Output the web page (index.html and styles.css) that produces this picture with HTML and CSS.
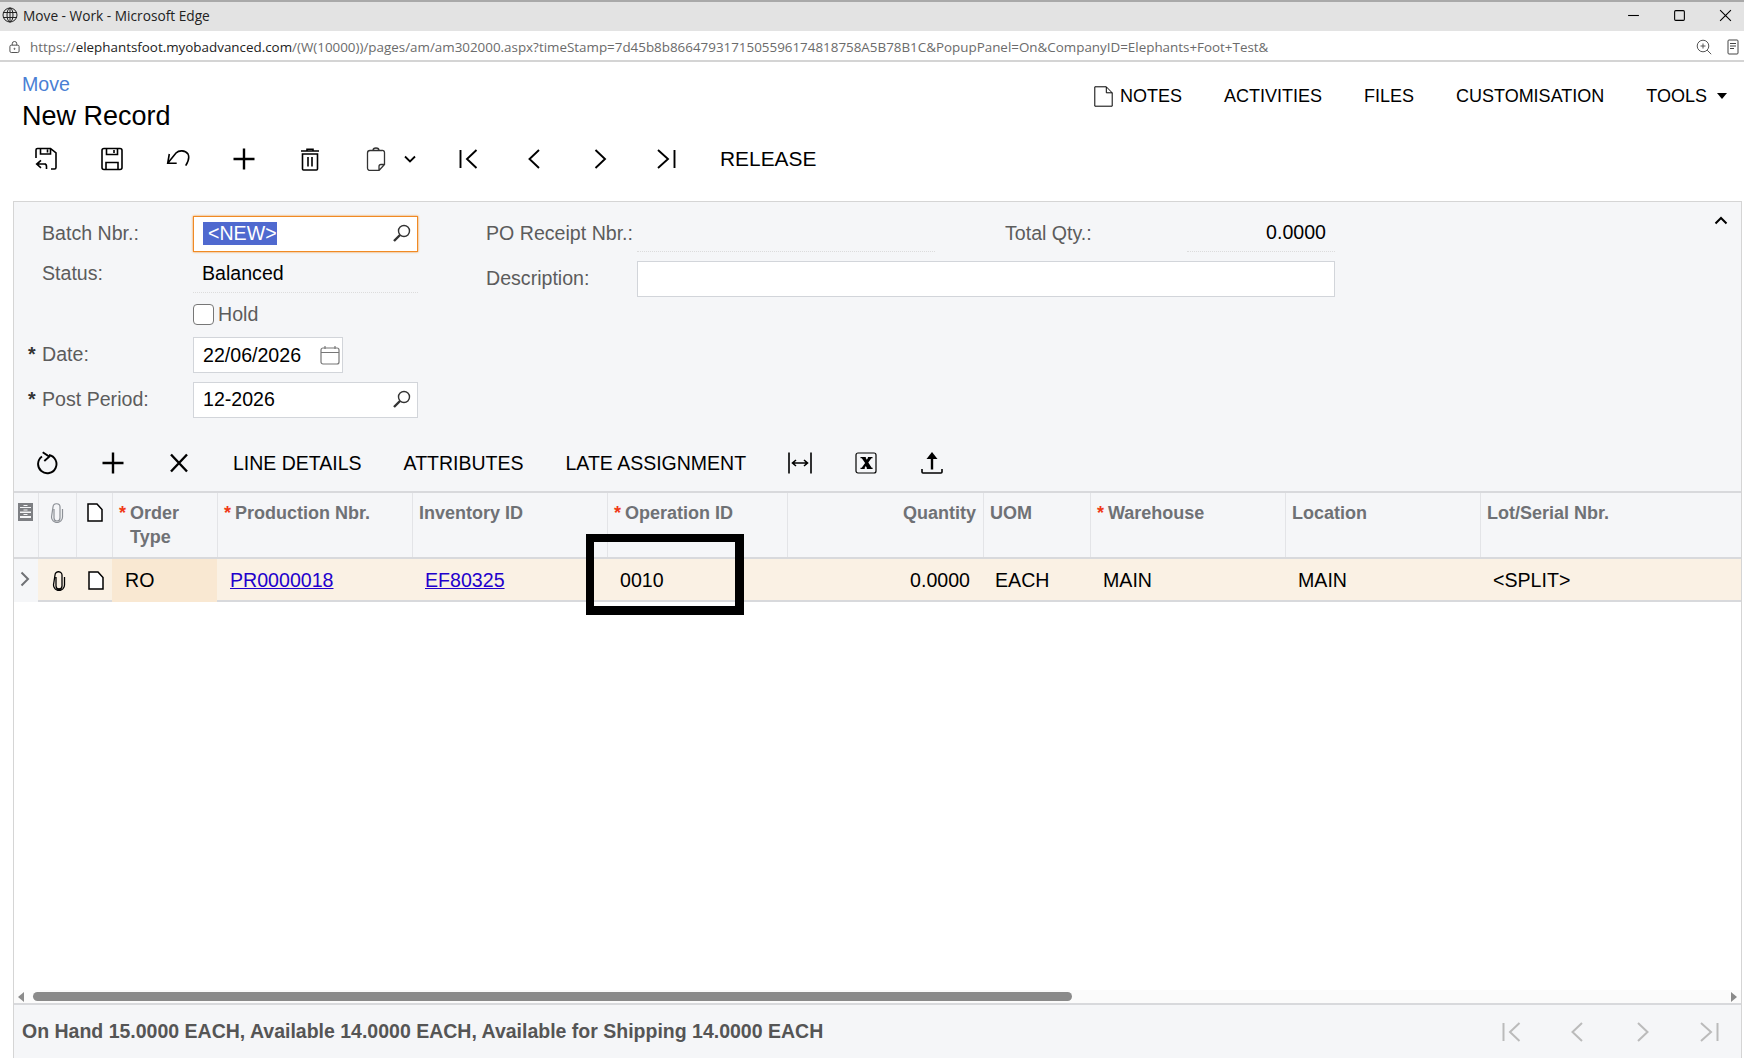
FILE: index.html
```html
<!DOCTYPE html>
<html lang="en">
  <head>
    <meta charset="UTF-8" />
    <title>Move - Work - Microsoft Edge</title>
    <link rel="stylesheet" href="styles.css">
  </head>

  <body>
    <div class="title-bar">
      <svg class="globe" viewBox="0 0 16 16"><circle cx="8" cy="8" r="7"/><ellipse cx="8" cy="8" rx="3" ry="7"/><path d="M1 5.5h14M1 10.5h14M8 1v14"/></svg>
      <span class="title-text">Move - Work - Microsoft Edge</span>
      <div class="window-btns">
        <svg viewBox="0 0 12 12"><path d="M1 6h10"/></svg>
        <svg viewBox="0 0 12 12"><rect x="1.5" y="1.5" width="9" height="9" rx="1"/></svg>
        <svg viewBox="0 0 12 12"><path d="M1 1l10 10M11 1L1 11"/></svg>
      </div>
    </div>

    <div class="address-bar">
      <svg class="lock" viewBox="0 0 12 14"><rect x="1" y="5" width="10" height="8" rx="1.5"/><path d="M3.5 5V3.5a2.5 2.5 0 0 1 5 0V5"/><circle cx="6" cy="9" r=".6"/></svg>
      <span class="url">https://<b>elephantsfoot.myobadvanced.com</b>/(W(10000))/pages/am/am302000.aspx?timeStamp=7d45b8b8664793171505596174818758A5B78B1C&amp;PopupPanel=On&amp;CompanyID=Elephants+Foot+Test&amp;</span>
      <svg class="addr-zoom" viewBox="0 0 16 16"><circle cx="7" cy="7" r="5.8"/><path d="M11.2 11.2l4 4M7 4.5v5M4.5 7h5"/></svg>
      <svg class="addr-read" viewBox="0 0 12 16"><rect x="1" y="1" width="10" height="14" rx="1"/><path d="M3 4.5h6M3 7h6M3 9.5h4"/></svg>
    </div>

    <div class="page-head">
      <div class="head-titles">
        <a class="crumb">Move</a>
        <div class="record-title">New Record</div>
      </div>
      <div class="head-links">
        <span class="head-link notes">
          <svg viewBox="0 0 19 21"><path d="M.8.8h11.5l5.9 6v13.4H.8zM12.3.8v6h5.9"/></svg>
          NOTES
        </span>
        <span class="head-link">ACTIVITIES</span>
        <span class="head-link">FILES</span>
        <span class="head-link">CUSTOMISATION</span>
        <span class="head-link tools">TOOLS<i class="caret"></i></span>
      </div>
    </div>

    <div class="toolbar main-toolbar">
      <button class="tool"><svg viewBox="0 0 24 24"><path d="M2 11V3a1.5 1.5 0 0 1 1.5-1.5h13L22 6v14.500a1.500 1.500 0 0 1-1.500 1.500H17M6.500 1.500v5.500h10V1.500M13.500 2.500v3"/><path d="M12 17H3.500M7 13.300l-4.300 3.800L7 20.800M10.500 17c1.500 0 2 1 2 2.500V22"/></svg></button>
      <button class="tool"><svg viewBox="0 0 24 24"><rect x="2" y="1.500" width="20" height="21" rx="2"/><path d="M6.500 1.500v6h11v-6M14 3v3M6 22.500v-7h12v7"/></svg></button>
      <button class="tool"><svg viewBox="0 0 24 24"><path d="M3.300 7L1.700 16.300H10.700M1.700 16.300L10 6C13 3 19 3 22 7C24 11 22 15 19.700 18.700"/></svg></button>
      <button class="tool"><svg viewBox="0 0 24 24"><path class="thick" d="M12 1.500v21M1.500 12h21"/></svg></button>
      <button class="tool"><svg viewBox="0 0 24 24"><path d="M3 4h18M9 4V2.200h6V4M4.500 7h15v15a1 1 0 0 1-1 1h-13a1 1 0 0 1-1-1zM10 10v9.500M14 10v9.500"/></svg></button>
      <button class="tool paste">
        <svg class="paste-icon" viewBox="0 0 24 24"><path d="M6 3.500h12a2 2 0 0 1 2.500 2v12L15 23.500H6a2.500 2.500 0 0 1-2.500-2.500V6A2.500 2.500 0 0 1 6 3.500zM9 3.500a3 2.500 0 0 1 6 0M20.500 17.500H17a2 2 0 0 0-2 2v4"/></svg>
        <svg class="small-chevron" viewBox="0 0 12 8"><path d="M1 1.500l5 5 5-5"/></svg>
      </button>
      <button class="tool nav"><svg viewBox="0 0 24 24"><path d="M4.500 3v18M20.500 3L11 12l9.500 9"/></svg></button>
      <button class="tool nav"><svg viewBox="0 0 24 24"><path d="M17 3l-9.500 9 9.500 9"/></svg></button>
      <button class="tool nav"><svg viewBox="0 0 24 24"><path d="M7.500 3l9.500 9-9.500 9"/></svg></button>
      <button class="tool nav"><svg viewBox="0 0 24 24"><path d="M20.500 3v18M4 3l10 9-10 9"/></svg></button>
      <button class="text-tool release">RELEASE</button>
    </div>

    <div class="panel">
      <div class="form">
        <div class="form-left">
          <div class="field lifted">
            <span class="field-label">Batch Nbr.:</span>
            <div class="input wide focused">
              <span class="selected">&lt;NEW&gt;</span>
              <svg class="search" viewBox="0 0 18 18"><circle cx="11" cy="7" r="5.500"/><path class="thick" d="M7 11l-6 6"/></svg>
            </div>
          </div>
          <div class="field status-row lifted">
            <span class="field-label">Status:</span>
            <div class="readonly">Balanced</div>
          </div>
          <div class="field hold-row">
            <span class="field-label"></span>
            <span class="checkbox"></span>
            <span class="check-text">Hold</span>
          </div>
          <div class="field date-row lifted">
            <span class="field-label req-label">Date:</span>
            <div class="input date">
              22/06/2026
              <svg class="calendar" viewBox="0 0 20 20"><rect x="1" y="3" width="18" height="16" rx="2"/><path d="M1 7.500h18M5 1v3M15 1v3"/></svg>
            </div>
          </div>
          <div class="field period-row lifted">
            <span class="field-label req-label">Post Period:</span>
            <div class="input wide">
              12-2026
              <svg class="search" viewBox="0 0 18 18"><circle cx="11" cy="7" r="5.500"/><path class="thick" d="M7 11l-6 6"/></svg>
            </div>
          </div>
        </div>

        <div class="form-right">
          <div class="right-row first">
            <span class="right-label">PO Receipt Nbr.:</span>
            <div class="right-value po"></div>
            <span class="total-label">Total Qty.:</span>
            <div class="right-value total">0.0000</div>
          </div>
          <div class="right-row">
            <span class="right-label">Description:</span>
            <div class="input description"></div>
          </div>
        </div>

        <svg class="collapse" viewBox="0 0 14 9"><path d="M1.500 7.500L7 2l5.500 5.500"/></svg>
      </div>

      <div class="toolbar grid-toolbar">
        <button class="tool"><svg class="refresh" viewBox="0 0 24 24"><path d="M7 5.500A9.200 9.200 0 1 0 14 4"/><path d="M7.700 1.300l6.600 4.400L9.300 10"/></svg></button>
        <button class="tool"><svg viewBox="0 0 24 24"><path class="thick" d="M12 1.500v21M1.500 12h21"/></svg></button>
        <button class="tool"><svg viewBox="0 0 24 24"><path class="thick" d="M4 3.500l16 17M20 3.500l-16 17"/></svg></button>
        <button class="text-tool">LINE DETAILS</button>
        <button class="text-tool">ATTRIBUTES</button>
        <button class="text-tool">LATE ASSIGNMENT</button>
        <button class="tool"><svg viewBox="0 0 24 24"><path d="M1 1.500v21M23 1.500v21M5 12h14M8 9l-3.500 3L8 15M16 9l3.500 3-3.500 3"/></svg></button>
        <button class="tool"><svg viewBox="0 0 24 24"><rect x="2" y="2" width="20" height="20" rx="2" stroke-width="1.200"/><path class="excel" d="M6.500 6h5.300v1l1 1.800 1.100-1.800V6h4.600v1.200h-1.100l-3.100 4.300 3.400 5.300h.9V18h-5.800v-1.200l-1-1.700-1.100 1.700V18H6.500v-1.200h1.200l3.400-4.700-3.300-4.900H6.500z"/></svg></button>
        <button class="tool"><svg viewBox="0 0 24 24"><path d="M2 18V21a1 1 0 0 0 1 1h18a1 1 0 0 0 1-1v-3"/><path class="thick" d="M12 18.500V6"/><path class="fill" d="M12 1l5.500 7H6.500z"/></svg></button>
      </div>

      <div class="grid">
        <div class="grid-head">
          <div class="cell icon-cell">
            <svg class="cabinet" viewBox="0 0 15 18"><path d="M0 0h15v18H0z"/><path class="cut" d="M2 4h11v1H2zM2 8.500h11v1.500H2zM2 13h11v2H2zM5.500 2h4v1h-4zM5.500 6.500h4v1h-4zM5.500 11h4v1h-4z"/></svg>
          </div>
          <div class="cell icon-cell"><svg class="clip muted" viewBox="0 0 14 20"><path d="M4 6v9a3 3 0 0 0 6 0V4.500a3.500 3.500 0 0 0-7-.5L1.500 14a5.500 5.500 0 0 0 11 0V6"/></svg></div>
          <div class="cell icon-cell"><svg class="doc" viewBox="0 0 16 19"><path d="M1 1h9l5 5.500V18H1z"/></svg></div>
          <div class="cell head-req">Order Type</div>
          <div class="cell head-req">Production Nbr.</div>
          <div class="cell">Inventory ID</div>
          <div class="cell head-req">Operation ID</div>
          <div class="cell right">Quantity</div>
          <div class="cell">UOM</div>
          <div class="cell head-req">Warehouse</div>
          <div class="cell">Location</div>
          <div class="cell">Lot/Serial Nbr.</div>
        </div>
        <div class="grid-row">
          <div class="cell row-mark"><svg viewBox="0 0 10 16"><path d="M1.500 1.500L8 8l-6.500 6.500"/></svg></div>
          <div class="cell icon-cell shifted"><svg class="clip" viewBox="0 0 14 20"><path d="M4 6v9a3 3 0 0 0 6 0V4.500a3.500 3.500 0 0 0-7-.5L1.500 14a5.500 5.500 0 0 0 11 0V6"/></svg></div>
          <div class="cell icon-cell shifted"><svg class="doc" viewBox="0 0 16 19"><path d="M1 1h9l5 5.500V18H1z"/></svg></div>
          <div class="cell active">RO</div>
          <div class="cell"><a class="link">PR0000018</a></div>
          <div class="cell"><a class="link">EF80325</a></div>
          <div class="cell">0010</div>
          <div class="cell right">0.0000</div>
          <div class="cell uom">EACH</div>
          <div class="cell">MAIN</div>
          <div class="cell">MAIN</div>
          <div class="cell">&lt;SPLIT&gt;</div>
        </div>
        <div class="callout"></div>
      </div>

      <div class="scrollbar">
        <i class="arrow-left"></i>
        <div class="thumb"></div>
        <i class="arrow-right"></i>
      </div>

      <div class="footer">
        <span class="footer-text">On Hand 15.0000 EACH, Available 14.0000 EACH, Available for Shipping 14.0000 EACH</span>
        <div class="pager">
          <svg viewBox="0 0 24 24"><path d="M4.500 3v18M20.500 3L11 12l9.500 9"/></svg>
          <svg viewBox="0 0 24 24"><path d="M17 3l-9.500 9 9.500 9"/></svg>
          <svg viewBox="0 0 24 24"><path d="M7 3l9.500 9L7 21"/></svg>
          <svg viewBox="0 0 24 24"><path d="M20.500 3v18M4 3l10 9-10 9"/></svg>
        </div>
      </div>
    </div>
  </body>
</html>
```

FILE: styles.css
```css
* {
  box-sizing: border-box;
}

body {
  display: flex;
  flex-direction: column;
  height: 1058px;
  margin: 0;
  overflow: hidden;
  background-color: #fff;
  color: #000;
  font-family: "Liberation Sans", Arial, sans-serif;
  font-size: 19.6px;
}

svg {
  fill: none;
  stroke: #000;
  stroke-width: 1.6;
}

.thick {
  stroke-width: 2.4;
}

/* browser chrome */
.title-bar {
  display: flex;
  align-items: center;
  flex: none;
  height: 31px;
  padding: 0 0 3px 2px;
  border-top: 2px solid #a9a9a9;
  background-color: #e3e3e3;
}

.globe {
  width: 16px;
  height: 16px;
  stroke: #222;
  stroke-width: 1;
}

.title-text {
  margin-left: 5px;
  font-family: "Open Sans", sans-serif;
  font-size: 13.7px;
  color: #222;
}

.window-btns {
  display: flex;
  gap: 33px;
  margin-left: auto;
  padding-right: 12px;
}

.window-btns svg {
  width: 13px;
  height: 13px;
  stroke-width: 1;
}

.address-bar {
  display: flex;
  align-items: center;
  flex: none;
  height: 31px;
  padding: 3px 5px 0 9px;
  border-bottom: 2px solid #d4d4d4;
}

.lock {
  width: 11px;
  height: 14px;
  stroke: #444;
  stroke-width: 1;
}

.url {
  margin-left: 10px;
  font-family: "Open Sans", sans-serif;
  font-size: 13.4px;
  color: #6b6b6b;
  white-space: nowrap;
}

.url b {
  color: #222;
  font-weight: 400;
}

.addr-zoom {
  width: 16px;
  height: 16px;
  margin-left: auto;
  stroke: #555;
  stroke-width: 1;
}

.addr-read {
  width: 12px;
  height: 16px;
  margin-left: 15px;
  stroke: #444;
  stroke-width: 1;
}

/* page header */
.page-head {
  display: flex;
  justify-content: space-between;
  flex: none;
  height: 70px;
  padding: 10px 17px 0 22px;
}

.crumb {
  display: block;
  line-height: 24px;
  color: #4a7fd4;
}

.record-title {
  margin-top: 4px;
  font-size: 27px;
  line-height: 32px;
}

.head-links {
  display: flex;
  align-items: center;
  gap: 42px;
  height: 48px;
  font-size: 18px;
}

.notes {
  display: flex;
  align-items: center;
  gap: 7px;
}

.notes svg {
  width: 19px;
  height: 21px;
  stroke-width: 1;
}

.tools {
  display: flex;
  align-items: center;
}

.caret {
  width: 0;
  height: 0;
  margin-left: 10px;
  border-top: 6px solid #000;
  border-left: 5px solid transparent;
  border-right: 5px solid transparent;
}

/* toolbars */
.toolbar {
  display: flex;
  align-items: center;
  flex: none;
  height: 54px;
}

.main-toolbar {
  margin: 0 0 15px 13px;
}

button {
  display: flex;
  align-items: center;
  justify-content: center;
  height: 54px;
  padding: 0;
  border: 0;
  background: none;
  color: #000;
  font-family: inherit;
  font-size: 19.5px;
}

.tool {
  width: 66px;
}

.tool svg {
  width: 24px;
  height: 24px;
}

.tool.nav svg {
  stroke-width: 1.9;
}

.tool .refresh {
  stroke-width: 1.9;
}

.text-tool {
  padding: 0 21px;
}

.release {
  font-size: 20.9px;
}

.paste {
  width: 92px;
  justify-content: flex-start;
  padding-left: 21px;
}

.tool .paste-icon {
  stroke: #333;
  stroke-width: 1.3;
}

.tool .small-chevron {
  width: 12px;
  height: 8px;
  margin-left: 16px;
  stroke-width: 1.8;
}

/* form panel */
.panel {
  display: flex;
  flex-direction: column;
  flex: 1;
  margin: 0 2px 0 13px;
  border-top: 1px solid #d5d5d5;
  border-left: 1px solid #d5d5d5;
  border-right: 1px solid #d5d5d5;
  background-color: #f5f6f8;
}

.form {
  display: flex;
  flex: none;
  height: 234px;
  padding-top: 14px;
  color: #5c5c5c;
}

.form-left {
  width: 404px;
}

.field {
  display: flex;
  align-items: center;
  height: 36px;
}

.field-label {
  flex: none;
  width: 179px;
  padding-left: 28px;
}

.lifted .field-label {
  padding-bottom: 2px;
}

.req-label::before {
  content: "*";
  display: inline-block;
  width: 14px;
  margin-left: -14px;
  color: #333;
  font-weight: 700;
}

.status-row {
  height: 38px;
  margin-top: 3px;
}

.hold-row {
  height: 21px;
  margin-top: 11px;
}

.date-row {
  margin-top: 12px;
}

.period-row {
  margin-top: 9px;
}

.period-row .input {
  padding-bottom: 2px;
}

.input {
  display: flex;
  align-items: center;
  height: 36px;
  padding-left: 9px;
  border: 1px solid #d2d5da;
  background-color: #fff;
  color: #000;
}

.wide {
  flex: none;
  width: 225px;
}

.focused {
  padding-bottom: 2px;
  border-color: #f08a24;
  box-shadow: 0 0 2px #f08a24;
}

.selected {
  padding-left: 5px;
  background-color: #4f69cf;
  color: #fff;
  line-height: 23px;
}

.search {
  width: 18px;
  height: 18px;
  margin-left: auto;
  margin-right: 6px;
  stroke: #333;
  stroke-width: 1.4;
}

.readonly {
  width: 225px;
  height: 38px;
  padding-left: 9px;
  border-bottom: 1px dotted #dcdcdc;
  color: #000;
  line-height: 36px;
}

.checkbox {
  width: 21px;
  height: 21px;
  border: 1.5px solid #777;
  border-radius: 4px;
  background-color: #fff;
}

.check-text {
  margin-left: 4px;
}

.date {
  width: 150px;
}

.calendar {
  width: 20px;
  height: 20px;
  margin-left: auto;
  margin-right: 2px;
  stroke: #777;
  stroke-width: 1.2;
}

.form-right {
  margin-left: 68px;
}

.right-row {
  display: flex;
  align-items: center;
  height: 36px;
}

.right-row.first {
  margin-bottom: 9px;
}

.right-row span {
  padding-bottom: 2px;
}

.right-label {
  flex: none;
  width: 151px;
}

.right-value {
  height: 36px;
  border-bottom: 1px dotted #dcdcdc;
  color: #000;
  line-height: 33px;
}

.po {
  width: 298px;
}

.total-label {
  width: 182px;
  margin-left: 70px;
}

.total {
  width: 148px;
  padding-right: 9px;
  text-align: right;
}

.description {
  width: 698px;
}

.collapse {
  width: 14px;
  height: 9px;
  margin: 0 13px 0 auto;
  stroke-width: 2;
}

/* grid */
.grid {
  position: relative;
  flex: 1;
  margin-top: 1px;
  background-color: #fff;
}

.grid-head,
.grid-row {
  display: grid;
  grid-template-columns: 24px 38px 36px 105px 195px 195px 180px 196px 107px 195px 195px 1fr;
}

.grid-head {
  height: 68px;
  border-top: 2px solid #d8d9dc;
  border-bottom: 2px solid #d8d9dc;
  background-color: #f5f6f8;
  color: #6f7175;
  font-size: 18px;
  font-weight: 700;
  line-height: 24px;
}

.grid-head .cell {
  padding: 8px 7px 0 6px;
  border-left: 1px solid #e3e4e7;
}

.grid-head .right {
  padding-right: 7px;
}

.head-req {
  position: relative;
  padding-left: 17px !important;
}

.head-req::before {
  content: "*";
  position: absolute;
  left: 6px;
  top: 8px;
  color: #f03a17;
}

.grid-row {
  height: 43px;
  border-bottom: 2px solid #d8d9dc;
  background-color: #faf1e4;
  line-height: 43px;
}

.grid-row .cell {
  padding: 0 13px;
}

.grid-head .icon-cell,
.grid-row .icon-cell {
  display: flex;
  justify-content: center;
  padding: 0;
}

.grid-head .icon-cell {
  padding-top: 10px;
}

.grid-head .icon-cell:first-child {
  justify-content: flex-start;
  padding-left: 4px;
  border-left: 0;
}

.grid-row .icon-cell {
  align-items: center;
}

.grid-row .shifted {
  padding-left: 4px;
}

.grid-row .row-mark {
  display: flex;
  align-items: center;
  padding: 0 0 4px 6px;
  background-color: #f5f6f8;
}

.row-mark svg {
  width: 10px;
  height: 16px;
  stroke: #6f7175;
  stroke-width: 2;
}

.cell.right {
  text-align: right;
}

.grid-row .cell.right {
  padding-right: 13px;
}

.grid-row .uom {
  padding-left: 12px;
}

.cell.active {
  background-color: #f9e8d2;
}

.link {
  color: #2200cc;
  text-decoration: underline;
}

.cabinet {
  width: 15px;
  height: 18px;
  fill: #7d7f83;
  stroke: none;
}

.cabinet .cut {
  fill: #f5f6f8;
}

.clip {
  width: 14px;
  height: 20px;
  stroke-width: 1.3;
}

.clip.muted {
  margin-right: 2px;
  stroke: #8d9197;
  stroke-width: 1.2;
}

.doc {
  width: 16px;
  height: 19px;
  fill: #fff;
  stroke-width: 1.5;
}

.excel {
  fill: #000;
  stroke: none;
}

.fill {
  fill: #000;
  stroke: none;
}

/* box drawn on top of the screenshot */
.callout {
  position: absolute;
  left: 572px;
  top: 43px;
  width: 158px;
  height: 81px;
  border-style: solid;
  border-color: #000;
  border-width: 8px 9px 9px 8px;
}

/* scrollbar and footer */
.scrollbar {
  display: flex;
  align-items: center;
  flex: none;
  height: 13px;
  padding: 0 4px;
  background-color: #fbfbfb;
}

.thumb {
  width: 1039px;
  height: 9px;
  margin-left: 9px;
  border-radius: 5px;
  background-color: #8a8a8a;
}

.arrow-left,
.arrow-right {
  width: 0;
  height: 0;
  border-top: 5px solid transparent;
  border-bottom: 5px solid transparent;
}

.arrow-left {
  border-right: 6px solid #8a8a8a;
}

.arrow-right {
  margin-left: auto;
  border-left: 6px solid #8a8a8a;
}

.footer {
  display: flex;
  align-items: center;
  flex: none;
  height: 55px;
  padding: 0 0 0 8px;
  border-top: 2px solid #d8d9dc;
  color: #555;
  font-size: 19.5px;
  font-weight: 700;
}

.pager {
  display: flex;
  gap: 42px;
  margin-left: auto;
  padding-right: 20px;
}

.pager svg {
  width: 24px;
  height: 24px;
  stroke: #bbb;
  stroke-width: 2;
}
```
